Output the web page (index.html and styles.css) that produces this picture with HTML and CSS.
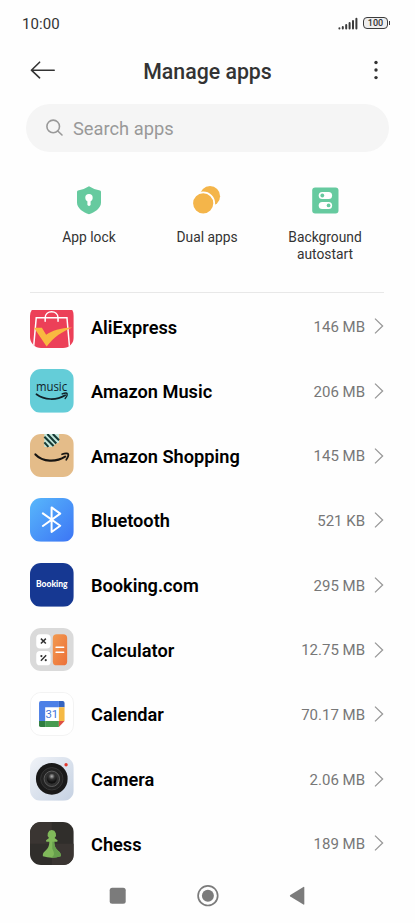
FILE: index.html
```html
<!DOCTYPE html>
<html lang="en">
<head>
    <meta charset="UTF-8">
    <meta name="viewport" content="width=device-width, initial-scale=1.0">
    <title>Manage apps</title>
    <link rel="stylesheet" href="styles.css">
</head>
<body>
    <div class="status-bar">
        <span class="clock">10:00</span>
        <div class="status-icons">
            <svg width="20" height="13" viewBox="0 0 20 13">
                <g stroke="#3c3c3c" stroke-width="2" stroke-linecap="round">
                    <path d="M1.4 11.3v.2M4.8 9.9v1.6M8.2 8.1v3.4M11.6 6v5.5M15 4v7.5M18.4 1.8v9.7" />
                </g>
            </svg>
            <div class="battery">100</div>
        </div>
    </div>

    <header class="header">
        <svg class="back" width="26" height="18" viewBox="0 0 26 18" fill="none" stroke="#333" stroke-width="1.6" stroke-linecap="round" stroke-linejoin="round">
            <path d="M24.2 9.2H1.4M9.6 1.2L1.4 9.2L9.6 16.8" />
        </svg>
        <h1>Manage apps</h1>
        <svg class="more" width="6" height="20" viewBox="0 0 6 20" fill="#333">
            <circle cx="3" cy="2.5" r="1.7" />
            <circle cx="3" cy="10" r="1.7" />
            <circle cx="3" cy="17.6" r="1.7" />
        </svg>
    </header>

    <div class="search">
        <svg width="18" height="18" viewBox="0 0 18 18" fill="none" stroke="#999" stroke-width="1.6" stroke-linecap="round">
            <circle cx="7.2" cy="7.4" r="6.3" />
            <path d="M11.8 12L16 16" />
        </svg>
        <span>Search apps</span>
    </div>

    <nav class="shortcuts">
        <div class="shortcut">
            <svg width="30" height="30" viewBox="0 0 30 30">
                <path d="M15 1.2Q20.5 4.8 26 5.5Q27 5.8 27 7V17.5C27 23.5 20.5 27.3 15 29.3C9.5 27.3 3 23.5 3 17.5V7Q3 5.8 4 5.5Q9.5 4.8 15 1.2Z" fill="#66ca9f" />
                <circle cx="15" cy="12.8" r="3.7" fill="#fff" />
                <path d="M15 14V19.3" stroke="#fff" stroke-width="3.2" stroke-linecap="round" />
            </svg>
            <span>App lock</span>
        </div>
        <div class="shortcut">
            <svg width="30" height="30" viewBox="0 0 30 30">
                <circle cx="18" cy="11.2" r="10.1" fill="#f4b54a" />
                <circle cx="11.2" cy="18.3" r="11" fill="#f4b54a" stroke="#fff" stroke-width="1.8" />
            </svg>
            <span>Dual apps</span>
        </div>
        <div class="shortcut">
            <svg width="30" height="30" viewBox="0 0 30 30">
                <rect x="2.2" y="2.4" width="26.3" height="26" rx="3" fill="#66ca9f" />
                <rect x="8.7" y="7" width="13.4" height="7" rx="3.5" fill="#fff" />
                <rect x="8.7" y="16.9" width="13.4" height="7" rx="3.5" fill="#fff" />
                <circle cx="12.3" cy="10.5" r="1.9" fill="#66ca9f" />
                <circle cx="18.6" cy="20.4" r="1.9" fill="#66ca9f" />
            </svg>
            <span>Background<br>autostart</span>
        </div>
    </nav>

    <main class="list-view">
        <ul class="app-list">
            <li class="app">
                <svg class="app-icon" viewBox="0 0 44 44">
                    <rect width="44" height="44" fill="#ec4058" />
                    <path d="M3.5 44L6.3 12.8H37.3L40 44" fill="none" stroke="#fff" stroke-width="1.5" />
                    <path d="M15.3 16.5V13C15.3 4.6 28.3 4.600 28.3 13V16.5" fill="none" stroke="#fff" stroke-width="1.5" stroke-linecap="round" />
                    <path d="M4 23H12L16.3 30C22.500 26 30 23.200 42.700 22.800C33 26.500 24 32.500 16.800 42Z" fill="#f9b940" />
                </svg>
                <span class="app-name">AliExpress</span>
                <span class="app-size">146 MB</span>
                <svg class="chevron" viewBox="0 0 10 18"><path d="M1 1.6L8.6 9L1 16.4" /></svg>
            </li>
            <li class="app">
                <svg class="app-icon" viewBox="0 0 44 44">
                    <rect width="44" height="44" fill="#64cdd8" />
                    <text class="music-logo" x="6" y="21.8" textLength="31.5" lengthAdjust="spacingAndGlyphs">music</text>
                    <path d="M6.5 25.5C14.5 31.5 26.5 32 35.5 26.5" fill="none" stroke="#122128" stroke-width="1.7" stroke-linecap="round" />
                    <path d="M32.5 25.2C35 24.2 37.2 24.2 37.5 24.9C37.8 26 36.8 28.5 35.5 29.8" fill="none" stroke="#122128" stroke-width="1.4" stroke-linecap="round" />
                </svg>
                <span class="app-name">Amazon Music</span>
                <span class="app-size">206 MB</span>
                <svg class="chevron" viewBox="0 0 10 18"><path d="M1 1.6L8.6 9L1 16.4" /></svg>
            </li>
            <li class="app">
                <svg class="app-icon" viewBox="0 0 44 44">
                    <rect width="44" height="44" fill="#e4bc89" />
                    <path d="M14.5 0H29.3V8.5L25.5 10.2L22.8 13H14.5Z" fill="#c4e8dc" />
                    <path d="M14.5 8.5L18.6 13M14.5 2.8L23.8 12.2M17.5 0L26.5 9.5M23 0L29.3 6.2" stroke="#173a35" stroke-width="2.1" />
                    <path d="M5.5 20.6C13 28.5 26.5 28.5 35.5 22.8" fill="none" stroke="#171512" stroke-width="2.2" stroke-linecap="round" />
                    <path d="M32.3 20.5C35.5 19.3 38.3 19.4 38.6 20.3C39 21.6 38 24.2 36.6 26" fill="none" stroke="#171512" stroke-width="1.7" stroke-linecap="round" />
                </svg>
                <span class="app-name">Amazon Shopping</span>
                <span class="app-size">145 MB</span>
                <svg class="chevron" viewBox="0 0 10 18"><path d="M1 1.6L8.6 9L1 16.4" /></svg>
            </li>
            <li class="app">
                <svg class="app-icon" viewBox="0 0 44 44">
                    <defs>
                        <linearGradient id="bluetooth" x1="0" y1="0" x2="1" y2="1">
                            <stop offset="0" stop-color="#58b7fb" />
                            <stop offset="1" stop-color="#3c75f5" />
                        </linearGradient>
                    </defs>
                    <rect width="44" height="44" fill="url(#bluetooth)" />
                    <path d="M13 15.5L30.5 28L21.8 34.3V9.5L30.5 15.8L13 28.3" fill="none" stroke="#fff" stroke-width="2" stroke-linecap="round" stroke-linejoin="round" />
                </svg>
                <span class="app-name">Bluetooth</span>
                <span class="app-size">521 KB</span>
                <svg class="chevron" viewBox="0 0 10 18"><path d="M1 1.6L8.6 9L1 16.4" /></svg>
            </li>
            <li class="app">
                <svg class="app-icon" viewBox="0 0 44 44">
                    <rect width="44" height="44" fill="#163892" />
                    <text class="booking-logo" x="6" y="24.6" textLength="32" lengthAdjust="spacingAndGlyphs">Booking</text>
                </svg>
                <span class="app-name">Booking.com</span>
                <span class="app-size">295 MB</span>
                <svg class="chevron" viewBox="0 0 10 18"><path d="M1 1.6L8.6 9L1 16.4" /></svg>
            </li>
            <li class="app">
                <svg class="app-icon" viewBox="0 0 44 44">
                    <defs>
                        <linearGradient id="equals" x1="0" y1="0" x2="1" y2="1">
                            <stop offset="0" stop-color="#f29a50" />
                            <stop offset="1" stop-color="#ec7038" />
                        </linearGradient>
                    </defs>
                    <rect width="44" height="44" fill="#dadada" />
                    <rect x="6.3" y="6.2" width="14.5" height="14.5" rx="4" fill="#fff" />
                    <rect x="6.3" y="23.2" width="14.5" height="14.5" rx="4" fill="#fff" />
                    <rect x="23" y="6.2" width="14.5" height="31.5" rx="4" fill="url(#equals)" />
                    <path d="M11 10.7L16 15.7M16 10.7L11 15.7M11 33L16.3 27.6" stroke="#333" stroke-width="1.5" />
                    <circle cx="11.5" cy="28.3" r="1.1" fill="#333" />
                    <circle cx="15.9" cy="32.5" r="1.1" fill="#333" />
                    <path d="M26.3 19.4H34M26.3 24.4H34" stroke="#fff" stroke-width="1.5" stroke-linecap="round" />
                </svg>
                <span class="app-name">Calculator</span>
                <span class="app-size">12.75 MB</span>
                <svg class="chevron" viewBox="0 0 10 18"><path d="M1 1.6L8.6 9L1 16.4" /></svg>
            </li>
            <li class="app">
                <svg class="app-icon bordered" viewBox="0 0 44 44">
                    <rect width="44" height="44" fill="#fff" />
                    <path d="M10.500 8.500H29.5V15H15V29.5H8.500V10.500Q8.500 8.500 10.500 8.500Z" fill="#4d80e6" />
                    <path d="M29.5 8.500H33.5Q35.5 8.500 35.5 10.500V15H29.5Z" fill="#3564c0" />
                    <path d="M29.5 15H35.5V29.5H29.5Z" fill="#f5b944" />
                    <path d="M15 29.5H29.5V36H15Z" fill="#469a50" />
                    <path d="M8.500 29.5H15V36H10.500Q8.500 36 8.500 34Z" fill="#2f7d40" />
                    <path d="M29.5 29.5H35.5L29.5 36Z" fill="#dd5044" />
                    <text class="calendar-logo" x="22" y="26.5" text-anchor="middle">31</text>
                </svg>
                <span class="app-name">Calendar</span>
                <span class="app-size">70.17 MB</span>
                <svg class="chevron" viewBox="0 0 10 18"><path d="M1 1.6L8.6 9L1 16.4" /></svg>
            </li>
            <li class="app">
                <svg class="app-icon" viewBox="0 0 44 44">
                    <defs>
                        <linearGradient id="camera" x1="0" y1="0" x2="1" y2="1">
                            <stop offset="0" stop-color="#f0f3f8" />
                            <stop offset="1" stop-color="#c5d1e2" />
                        </linearGradient>
                        <radialGradient id="glass" cx=".5" cy=".25" r=".6">
                            <stop offset="0" stop-color="#b5b5b5" />
                            <stop offset=".5" stop-color="#333" />
                            <stop offset="1" stop-color="#111" />
                        </radialGradient>
                    </defs>
                    <rect width="44" height="44" fill="url(#camera)" />
                    <circle cx="22" cy="22" r="16" fill="#191919" />
                    <circle cx="22" cy="22" r="11.3" fill="#222" stroke="#3c3c3c" stroke-width=".8" />
                    <circle cx="22" cy="22" r="7.8" fill="#303030" stroke="#606060" stroke-width=".9" />
                    <circle cx="22" cy="22" r="5" fill="url(#glass)" />
                    <circle cx="36.4" cy="7.8" r="1.7" fill="#e2382e" />
                </svg>
                <span class="app-name">Camera</span>
                <span class="app-size">2.06 MB</span>
                <svg class="chevron" viewBox="0 0 10 18"><path d="M1 1.6L8.6 9L1 16.4" /></svg>
            </li>
            <li class="app">
                <svg class="app-icon" viewBox="0 0 44 44">
                    <rect width="44" height="44" fill="#302e2b" />
                    <path d="M0 0H22V22H0ZM22 22H44V44H22Z" fill="#3a3532" />
                    <path d="M22 8.2A4.6 4.6 0 0 1 24.8 16.2L27.8 18.3Q28 20 27 20H24.5C24.5 25 26.5 27.5 29.5 30C31 31.5 31.2 33 31 34.5Q22 37.5 13 34.5C12.8 33 13 31.5 14.5 30C17.5 27.5 19.5 25 19.5 20H17Q16 20 16.2 18.3L19.2 16.2A4.6 4.6 0 0 1 22 8.2Z" fill="#80b95a" />
                    <path d="M24.5 20C24.5 25 26.5 27.5 29.5 30C31 31.5 31.2 33 31 34.5Q26 36.2 21 36C26 34 24 30 22.5 27V20Z" fill="#67a04d" />
                </svg>
                <span class="app-name">Chess</span>
                <span class="app-size">189 MB</span>
                <svg class="chevron" viewBox="0 0 10 18"><path d="M1 1.6L8.6 9L1 16.4" /></svg>
            </li>
        </ul>
    </main>

    <footer class="nav-bar">
        <svg width="22" height="22" viewBox="0 0 22 22" fill="#7b7b7b">
            <rect x="2.7" y="2.7" width="16" height="16" rx="2.5" />
        </svg>
        <svg width="22" height="22" viewBox="0 0 22 22">
            <circle cx="10.9" cy="10.7" r="9.8" fill="none" stroke="#7b7b7b" stroke-width="1.7" />
            <circle cx="10.9" cy="10.7" r="6" fill="#7b7b7b" />
        </svg>
        <svg width="22" height="22" viewBox="0 0 22 22" fill="#7b7b7b">
            <path d="M18.3 2.4V19Q18.3 20 17.4 19.5L4.3 11.6Q3.3 10.7 4.3 9.9L17.4 1.9Q18.3 1.4 18.3 2.4Z" />
        </svg>
    </footer>
</body>
</html>
```

FILE: styles.css
```css
:root {
    --text-color: #333;
    --muted-color: #777;
    --gray: #999;
    --line-color: #e8e8e8;
    --search-bg: #f5f5f5;
}

* {
    margin: 0;
    padding: 0;
    box-sizing: border-box;
}

body {
    height: 923px;
    display: flex;
    flex-direction: column;
    overflow: hidden;
    background-color: #fefefe;
    color: var(--text-color);
    font-family: 'Roboto', sans-serif;
}

svg {
    display: block;
    flex-shrink: 0;
}

.status-bar {
    height: 46px;
    padding: 0 27px 0 22px;
    display: flex;
    justify-content: space-between;
    align-items: center;
}

.clock {
    padding-top: 1px;
    font-size: 15px;
    font-weight: 450;
    letter-spacing: 0.1px;
}

.status-icons {
    display: flex;
    align-items: center;
    gap: 5px;
}

.battery {
    position: relative;
    width: 25px;
    height: 12px;
    border: 1px solid #3c3c3c;
    border-radius: 4px;
    background-color: #eee;
    font-size: 9px;
    font-weight: 500;
    line-height: 11px;
    text-align: center;
}

.battery::after {
    content: "";
    position: absolute;
    top: 3px;
    right: -3px;
    width: 1px;
    height: 4px;
    background-color: #3c3c3c;
}

.header {
    height: 48px;
    padding: 0 36px 0 30px;
    display: grid;
    grid-template-columns: 26px 1fr 20px;
    align-items: center;
}

.header h1 {
    padding-top: 2px;
    font-size: 21.3px;
    font-weight: 500;
    text-align: center;
}

.more {
    justify-self: end;
}

.search {
    height: 48px;
    margin: 10.4px 26px 0;
    padding: 0 20px;
    display: flex;
    align-items: center;
    gap: 9px;
    border-radius: 24px;
    background-color: var(--search-bg);
    color: var(--gray);
    font-size: 18.3px;
    font-weight: 450;
}

.search span {
    padding-top: 1px;
}

.shortcuts {
    height: 140.6px;
    margin: 0 31px 0 30px;
    padding-top: 32.6px;
    display: grid;
    grid-template-columns: repeat(3, 118px);
    border-bottom: 1px solid var(--line-color);
}

.shortcut {
    display: flex;
    flex-direction: column;
    align-items: center;
    gap: 14.5px;
    font-size: 13.8px;
    line-height: 16.5px;
    text-align: center;
}

.list-view {
    height: 566px;
    margin-top: 17px;
    overflow: hidden;
}

.app-list {
    margin-top: -16px;
    list-style: none;
}

.app {
    height: 64.65px;
    padding: 0 31px 0 30px;
    display: flex;
    align-items: center;
}

.app-icon {
    width: 43.6px;
    height: 43.6px;
    margin-right: 17.4px;
    border-radius: 11px;
}

.app-icon.bordered {
    border: 1px solid #f3f3f3;
}

.app-name {
    flex: 1;
    padding-top: 1.5px;
    color: #000;
    font-size: 18.2px;
    font-weight: 600;
}

.app-size {
    padding-top: 1.5px;
    color: var(--muted-color);
    font-size: 15px;
}

.chevron {
    width: 10px;
    height: 18px;
    margin-left: 9px;
    fill: none;
    stroke: var(--gray);
    stroke-width: 1.3;
}

.music-logo {
    fill: #122128;
    font-family: 'Open Sans', sans-serif;
    font-size: 12px;
    font-weight: 500;
}

.booking-logo {
    fill: #fff;
    font-family: 'Lato', sans-serif;
    font-size: 9.3px;
    font-weight: 900;
}

.calendar-logo {
    fill: #4474d8;
    font-size: 12px;
}

.nav-bar {
    height: 40px;
    padding: 0 107px;
    display: flex;
    justify-content: space-between;
    align-items: center;
}
```
